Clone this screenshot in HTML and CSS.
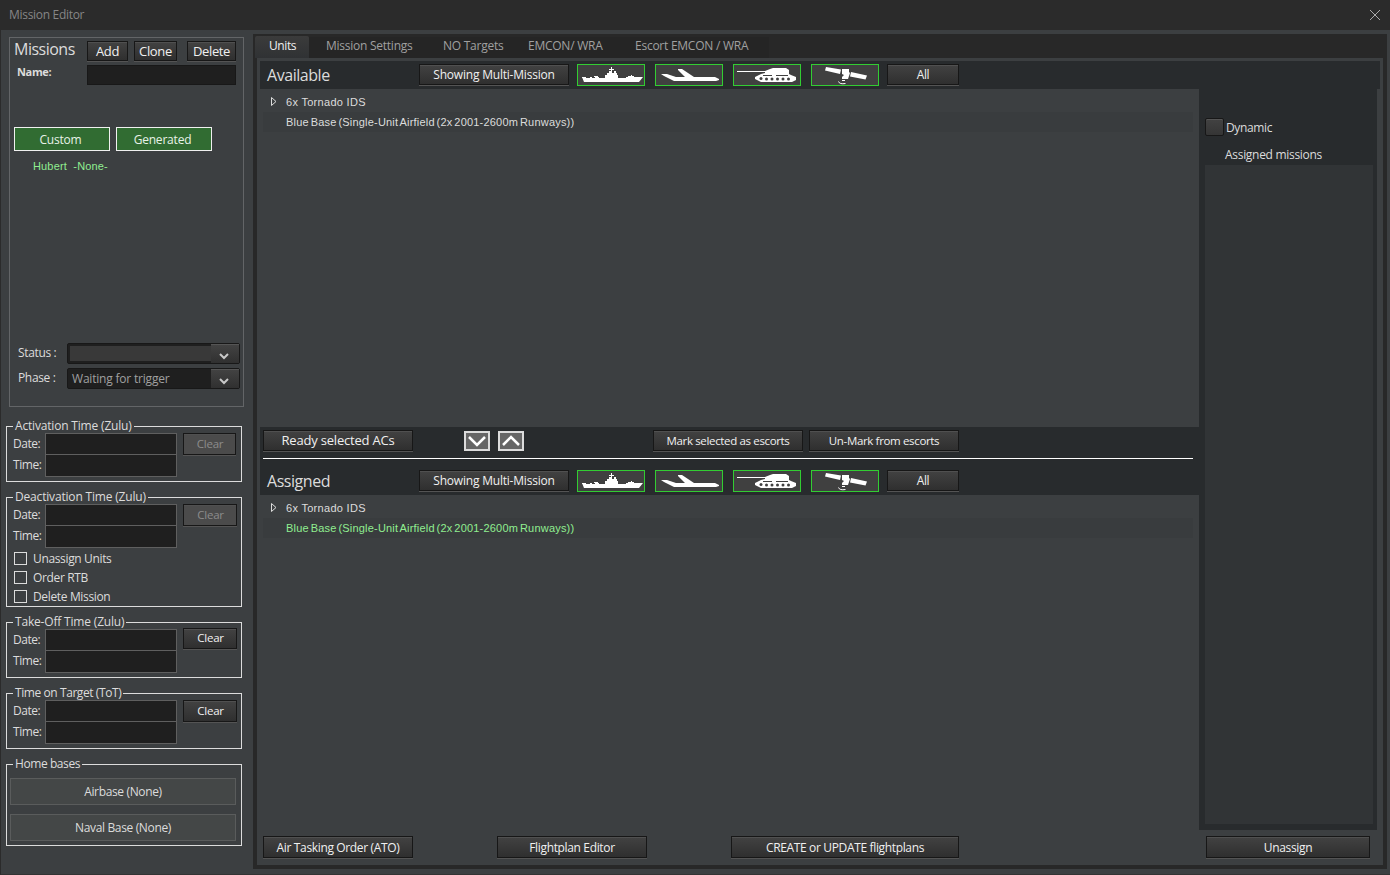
FILE: index.html
```html
<!DOCTYPE html>
<html lang="en">
<head>
    <meta charset="UTF-8">
    <meta name="viewport" content="width=device-width, initial-scale=1.0">
    <title>Mission Editor</title>
    <link rel="stylesheet" href="styles.css">
</head>
<body>
    <!-- shared unit type icons -->
    <svg class="defs" width="0" height="0">
        <symbol id="ship" viewBox="0 0 66 20">
            <path d="M4 12h2v1h6v-1h2v1h3v-1h4v1h6v-3h2V8h2V6h2V5h-2V4h2V2h1v2h2v1h-2v3h2V6h2v2h1v2h1v3h8v-1h2v-1h3v-1h1v1h2v1h9l-4 5H6z"/>
            <path d="M4 12h4v1H4zM16 11h4v1h-4z"/>
        </symbol>
        <symbol id="plane" viewBox="0 0 66 20">
            <path d="M5 9h6l9 3h9l-7-7V4h4l12 8h21l4 2v1l-3 1H18l-4-2-6-3z"/>
        </symbol>
        <symbol id="tank" viewBox="0 0 66 20">
            <path d="M3 6h28l5-2 3-1h13l3 2v4l2 1 5 2v3l-4 2H27l-6-3v-2l6-3 4-1V7H3z"/>
            <g class="wheels">
                <circle cx="27" cy="13.500" r="1.500"/>
                <circle cx="32.500" cy="14" r="1.500"/>
                <circle cx="38" cy="14" r="1.500"/>
                <circle cx="43.500" cy="14" r="1.500"/>
                <circle cx="49" cy="14" r="1.500"/>
                <circle cx="54.500" cy="14" r="1.500"/>
                <path d="M29 10.500h9M42 10.500h12"/>
            </g>
        </symbol>
        <symbol id="satellite" viewBox="0 0 66 20">
            <path d="M14 2l15 2.500-1 4.500-15-3.500zM30 4h7v3l1 1-1 3-1 3h-6v-2l2-2-2-1zM39 7l16 3.500-1.500 4L38 11.500z"/>
            <path class="wave" d="M30 15.500h3M26.500 16.500q1 3 7 2"/>
        </symbol>
    </svg>

    <div class="window">
        <header class="titlebar">
            <span>Mission Editor</span>
            <svg class="close" viewBox="0 0 10 10"><path d="M0 0l10 10M10 0L0 10"/></svg>
        </header>
        <div class="content">
            <aside class="sidebar">
                <section class="missions">
                    <div class="missions-head">
                        <h2>Missions</h2>
                        <button class="btn add">Add</button>
                        <button class="btn clone">Clone</button>
                        <button class="btn delete">Delete</button>
                    </div>
                    <div class="name-row">
                        <label for="name">Name:</label>
                        <input id="name" type="text">
                    </div>
                    <div class="filters">
                        <button>Custom</button>
                        <button>Generated</button>
                    </div>
                    <div class="mission-list">Hubert &nbsp;-None-</div>
                    <div class="combo-row">
                        <span>Status :</span>
                        <div class="combo empty"><span></span><i><svg viewBox="0 0 10 7"><path d="M1 1l4 4 4-4"/></svg></i></div>
                    </div>
                    <div class="combo-row">
                        <span>Phase :</span>
                        <div class="combo"><span>Waiting for trigger</span><i><svg viewBox="0 0 10 7"><path d="M1 1l4 4 4-4"/></svg></i></div>
                    </div>
                </section>

                <fieldset>
                    <legend>Activation Time (Zulu)</legend>
                    <div class="time-group">
                        <div class="labels"><span>Date:</span><span>Time:</span></div>
                        <div class="inputs"><input type="text"><input type="text"></div>
                        <button class="btn clear narrow" disabled>Clear</button>
                    </div>
                </fieldset>
                <fieldset class="deactivation">
                    <legend>Deactivation Time (Zulu)</legend>
                    <div class="time-group">
                        <div class="labels"><span>Date:</span><span>Time:</span></div>
                        <div class="inputs"><input type="text"><input type="text"></div>
                        <button class="btn clear" disabled>Clear</button>
                    </div>
                    <div class="checks">
                        <label><input type="checkbox">Unassign Units</label>
                        <label><input type="checkbox">Order RTB</label>
                        <label><input type="checkbox">Delete Mission</label>
                    </div>
                </fieldset>
                <fieldset>
                    <legend>Take-Off Time (Zulu)</legend>
                    <div class="time-group takeoff">
                        <div class="labels"><span>Date:</span><span>Time:</span></div>
                        <div class="inputs"><input type="text"><input type="text"></div>
                        <button class="btn clear">Clear</button>
                    </div>
                </fieldset>
                <fieldset>
                    <legend class="tot">Time on Target (ToT)</legend>
                    <div class="time-group">
                        <div class="labels"><span>Date:</span><span>Time:</span></div>
                        <div class="inputs"><input type="text"><input type="text"></div>
                        <button class="btn clear">Clear</button>
                    </div>
                </fieldset>
                <fieldset class="bases">
                    <legend class="tot">Home bases</legend>
                    <button>Airbase (None)</button>
                    <button>Naval Base (None)</button>
                </fieldset>
            </aside>

            <main class="tab-control">
                <nav class="tabs">
                    <a class="active">Units</a>
                    <a class="settings">Mission Settings</a>
                    <a class="targets">NO Targets</a>
                    <a class="emcon">EMCON/ WRA</a>
                    <a class="escort">Escort EMCON / WRA</a>
                </nav>
                <div class="page">
                    <div class="toolbar top">
                        <h3>Available</h3>
                        <button class="btn multi">Showing Multi-Mission</button>
                        <button class="type"><svg><use href="#ship"/></svg></button>
                        <button class="type"><svg><use href="#plane"/></svg></button>
                        <button class="type"><svg><use href="#tank"/></svg></button>
                        <button class="type"><svg><use href="#satellite"/></svg></button>
                        <button class="btn all">All</button>
                    </div>
                    <div class="columns">
                        <div class="units">
                            <div class="tree available">
                                <div class="node"><svg viewBox="0 0 6 9"><path d="M.5.5v8l4.500-4z"/></svg>6x Tornado IDS</div>
                                <div class="node alt">Blue Base (Single-Unit Airfield (2x 2001-2600m Runways))</div>
                            </div>
                            <div class="middle">
                                <div class="actions">
                                    <button class="btn ready">Ready selected ACs</button>
                                    <button class="arrow down"><svg viewBox="0 0 20 14"><path d="M2 3l8 8 8-8"/></svg></button>
                                    <button class="arrow"><svg viewBox="0 0 20 14"><path d="M2 11l8-8 8 8"/></svg></button>
                                    <button class="btn mark">Mark selected as escorts</button>
                                    <button class="btn unmark">Un-Mark from escorts</button>
                                </div>
                                <div class="toolbar">
                                    <h3>Assigned</h3>
                                    <button class="btn multi">Showing Multi-Mission</button>
                                    <button class="type"><svg><use href="#ship"/></svg></button>
                                    <button class="type"><svg><use href="#plane"/></svg></button>
                                    <button class="type"><svg><use href="#tank"/></svg></button>
                                    <button class="type"><svg><use href="#satellite"/></svg></button>
                                    <button class="btn all">All</button>
                                </div>
                            </div>
                            <div class="tree assigned">
                                <div class="node"><svg viewBox="0 0 6 9"><path d="M.5.5v8l4.500-4z"/></svg>6x Tornado IDS</div>
                                <div class="node alt green">Blue Base (Single-Unit Airfield (2x 2001-2600m Runways))</div>
                            </div>
                        </div>
                        <div class="assigned-panel">
                            <label class="dynamic"><span class="box"></span>Dynamic</label>
                            <h4>Assigned missions</h4>
                            <div class="assigned-list"></div>
                        </div>
                    </div>
                    <div class="footer">
                        <button class="btn ato">Air Tasking Order (ATO)</button>
                        <button class="btn editor">Flightplan Editor</button>
                        <button class="btn create">CREATE or UPDATE flightplans</button>
                        <button class="btn unassign">Unassign</button>
                    </div>
                </div>
            </main>
        </div>
    </div>
</body>
</html>
```
FILE: styles.css
```css
* {
    box-sizing: border-box;
}
body {
    margin: 0;
    background: #3c3f41;
    color: #dcdcdc;
    font-family: "Open Sans", "Noto Sans", sans-serif;
    font-size: 12px;
    letter-spacing: -0.35px;
    line-height: 16px;
}
button, input {
    font: inherit;
    letter-spacing: inherit;
    color: inherit;
    margin: 0;
    padding: 0;
    border-radius: 0;
}
h2, h3, h4 {
    margin: 0;
    font-weight: normal;
}
.defs {
    position: absolute;
}
.window {
    height: 875px;
    display: flex;
    flex-direction: column;
    border-left: 1px solid #2b2b2b;
    border-bottom: 1px solid #333;
    overflow: hidden;
}
.titlebar {
    height: 30px;
    flex: none;
    display: flex;
    align-items: center;
    justify-content: space-between;
    padding: 0 10px 0 8px;
    background: #2b2b2b;
    color: #868686;
}
.titlebar span {
    letter-spacing: -0.3px;
}
.close {
    width: 10px;
    height: 10px;
    margin-bottom: 1px;
    fill: none;
    stroke: #aaa;
    overflow: visible;
}
.content {
    flex: 1;
    display: flex;
}

/* buttons */
.btn {
    height: 21px;
    flex: none;
    border: 1px solid #171717;
    background: linear-gradient(#424242, #2f2f2f);
    box-shadow: inset 0 1px #505050, 0 1px #545454;
    color: #f0f0f0;
    line-height: 17px;
    white-space: nowrap;
}
.btn:disabled {
    background: #4b4b4b;
    color: #8b8b8b;
}

/* left column */
.sidebar {
    width: 252px;
    flex: none;
    padding: 7px 11px 0 5px;
}
.missions {
    width: 235px;
    height: 370px;
    margin: 0 0 12px 3px;
    border: 1px solid #636567;
}
.missions-head {
    display: flex;
    height: 24px;
    padding: 3px 0 0 4px;
}
.missions-head h2 {
    width: 73px;
    font-size: 16px;
    line-height: 17px;
    letter-spacing: -0.5px;
}
.missions-head .btn {
    height: 20px;
    font-size: 13px;
}
.add {
    width: 41px;
    margin-right: 6px;
}
.clone {
    width: 43px;
    margin-right: 10px;
}
.delete {
    width: 49px;
}
.name-row {
    display: flex;
    padding: 3px 0 0 7px;
    font-weight: bold;
    font-size: 11px;
}
.name-row label {
    width: 70px;
    line-height: 13px;
}
.name-row input {
    width: 149px;
    height: 20px;
    background: #1f1f1f;
    border: 1px solid #181818;
}
.filters {
    display: flex;
    gap: 6px;
    margin: 42px 0 0 4px;
}
.filters button {
    width: 96px;
    height: 24px;
    background: #316c32;
    border: 1px solid #f0f0f0;
    color: #e8f2e8;
    padding: 2px 3px 0 0;
    letter-spacing: -0.2px;
}
.mission-list {
    height: 192px;
    padding: 7px 0 0 23px;
    color: #90ee90;
    font: 11px/16px "Liberation Sans", Arial, sans-serif;
    letter-spacing: 0.15px;
}
.combo-row {
    display: flex;
    height: 25px;
    padding-left: 8px;
}
.combo-row > span {
    width: 49px;
    line-height: 20px;
}
.combo {
    width: 173px;
    height: 21px;
    display: flex;
    border: 1px solid #181818;
    border-radius: 2px;
    background: #1f1f1f;
    color: #a0a0a0;
    letter-spacing: -0.2px;
}
.combo span {
    flex: 1;
    padding-left: 4px;
    line-height: 19px;
}
.combo.empty span {
    margin: 2px 0 2px 2px;
    background: #393939;
}
.combo i {
    width: 28px;
    background: linear-gradient(#424242, #303030);
    border-top: 1px solid #555;
    text-align: center;
}
.combo svg {
    width: 10px;
    height: 7px;
    margin: 8px 0 0 8px;
    display: block;
    fill: none;
    stroke: #c8c8c8;
    stroke-width: 2;
}
fieldset {
    width: 236px;
    height: 63px;
    min-width: 0;
    margin: 0 0 8px;
    padding: 0;
    border: 1px solid #dcdcdc;
}
legend {
    height: 15px;
    margin-left: 6px;
    padding: 0 2px;
    line-height: 13px;
    letter-spacing: -0.18px;
}
.tot {
    letter-spacing: -0.42px;
}
.time-group {
    display: flex;
    margin-top: -1px;
    padding-left: 6px;
}
.labels {
    width: 32px;
    display: flex;
    flex-direction: column;
    padding-top: 1px;
    line-height: 20.500px;
    letter-spacing: -0.45px;
}
.inputs {
    width: 132px;
    margin-right: 6px;
}
.inputs input {
    display: block;
    width: 132px;
    height: 22px;
    background: #1f1f1f;
    border: 1px solid #5f5f5f;
}
.inputs input + input {
    height: 23px;
    margin-top: -1px;
}
.clear {
    width: 54px;
    height: 22px;
    padding: 0 0 2px 1px;
    font-size: 11.5px;
    letter-spacing: -0.2px;
}
.clear.narrow {
    width: 53px;
}
.takeoff .clear {
    height: 21px;
    margin-top: -1px;
}
.deactivation {
    height: 117px;
}
.checks {
    padding: 1px 0 0 7px;
}
.checks label {
    display: flex;
    align-items: center;
    height: 19px;
}
.checks input {
    appearance: none;
    width: 13px;
    height: 13px;
    margin-right: 6px;
    border: 1px solid #dcdcdc;
}
.bases {
    height: 89px;
}
.bases button {
    display: block;
    width: 226px;
    height: 27px;
    margin: 6px 0 0 3px;
    border: 1px solid #5a5c5c;
    background: #444747;
}
.bases button + button {
    margin-top: 9px;
}

/* tab control */
.tab-control {
    width: 1134px;
    height: 835px;
    margin-top: 4px;
    padding: 0 4px 4px;
    background: #282828;
}
.tabs {
    display: flex;
    height: 24px;
    margin-left: -2px;
    padding-top: 2px;
    color: #a0a0a0;
    letter-spacing: -0.25px;
}
.tabs a {
    margin-top: 1px;
    padding-left: 17px;
    line-height: 18px;
    background: #252525;
    white-space: nowrap;
}
.tabs .active {
    width: 54px;
    margin-top: 0;
    padding-left: 14px;
    line-height: 20px;
    border-radius: 2px 2px 0 0;
    background: linear-gradient(#3b3b3b, #303234);
    color: #f0f0f0;
    letter-spacing: -0.4px;
}
.settings {
    width: 117px;
}
.targets {
    width: 85px;
}
.emcon {
    width: 107px;
}
.escort {
    width: 151px;
}
.page {
    height: 807px;
    padding: 3px 3px 0;
    background: #3c3f41;
}
.toolbar {
    display: flex;
    padding-left: 7px;
}
.toolbar.top {
    height: 28px;
    padding-top: 3px;
    background: #282b2d;
}
.toolbar h3 {
    width: 152px;
    font-size: 16px;
    line-height: 23px;
    letter-spacing: -0.45px;
}
.multi {
    width: 150px;
    margin-right: 8px;
    letter-spacing: -0.2px;
}
.type {
    width: 68px;
    height: 22px;
    margin-right: 10px;
    border: 1px solid #32cd32;
    background: #404040;
}
.type svg {
    display: block;
    width: 66px;
    height: 20px;
    fill: #fff;
}
.wave {
    fill: none;
    stroke: #fff;
}
.wheels {
    fill: #404040;
    stroke: none;
}
.wheels path {
    stroke: #404040;
}
.all {
    width: 72px;
    margin-left: -2px;
}
.columns {
    display: flex;
    height: 741px;
}
.units {
    width: 939px;
}
.tree {
    height: 338px;
    padding: 3px 6px 0 3px;
    font: 11px/20px "Liberation Sans", Arial, sans-serif;
    letter-spacing: 0.3px;
}
.node {
    display: flex;
    align-items: center;
    height: 20px;
    padding-left: 8px;
}
.node svg {
    width: 6px;
    height: 9px;
    margin: 0 9px 1px 0;
    fill: none;
    stroke: #dcdcdc;
}
.node.alt {
    padding-left: 23px;
    background: #393c3e;
    letter-spacing: 0.2px;
    word-spacing: -1.4px;
}
.green {
    color: #90ee90;
}
.middle {
    height: 68px;
    background: #282b2d;
}
.actions {
    display: flex;
    height: 32px;
    margin: 0 6px 11px 3px;
    padding-top: 3px;
    border-bottom: 1px solid #fff;
}
.ready {
    width: 150px;
    margin-right: 51px;
    font-size: 13px;
    letter-spacing: -0.2px;
}
.arrow {
    width: 26px;
    height: 20px;
    margin: 1px 0 0;
    padding: 0;
    border: 2px solid #dcdcdc;
    background: #666;
}
.arrow.down {
    margin-right: 8px;
}
.arrow svg {
    display: block;
    width: 20px;
    height: 14px;
    margin: 0 auto;
    fill: none;
    stroke: #fff;
    stroke-width: 2.500;
}
.mark {
    width: 150px;
    margin: 0 6px 0 129px;
    font-size: 11.5px;
}
.unmark {
    width: 150px;
    font-size: 11.5px;
}
.assigned-panel {
    width: 178px;
    padding: 29px 4px 0 6px;
    background: #282b2d;
}
.dynamic {
    display: flex;
    line-height: 20px;
}
.box {
    width: 19px;
    height: 18px;
    margin-right: 2px;
    border: 1px solid #171717;
    border-radius: 2px;
    background: linear-gradient(#424242, #353535);
    box-shadow: inset 0 1px #555;
}
.assigned-panel h4 {
    height: 18px;
    margin: 9px 0 0 20px;
    font-size: 12px;
    line-height: 16px;
    letter-spacing: -0.3px;
}
.assigned-list {
    height: 659px;
    background: #313436;
}
.footer {
    display: flex;
    padding: 6px 0 0 3px;
}
.footer .btn {
    height: 22px;
}
.ato, .editor {
    width: 150px;
    margin-right: 84px;
}
.create {
    width: 228px;
    margin-right: 247px;
}
.unassign {
    width: 164px;
}
```
